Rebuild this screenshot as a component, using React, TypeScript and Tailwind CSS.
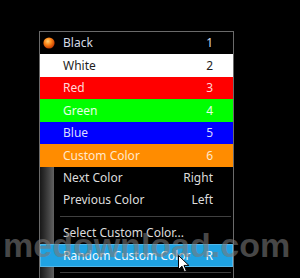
import React from "react";

const font = { fontFamily: '"Noto Sans", "Open Sans", sans-serif' };

function Orb() {
  return (
    <svg width="12" height="12" viewBox="0 0 12 12">
      <defs>
        <radialGradient id="orb" cx="0.4" cy="0.35" r="0.65">
          <stop offset="0" stopColor="#ffd27a" />
          <stop offset="0.45" stopColor="#ff8a1a" />
          <stop offset="1" stopColor="#c43a00" />
        </radialGradient>
      </defs>
      <circle cx="6" cy="6" r="5.6" fill="url(#orb)" />
    </svg>
  );
}

function Cursor() {
  return (
    <svg width="12" height="18" viewBox="0 0 12 18">
      <path d="M0.5 0.5 L0.5 14.5 L4 11.2 L6.4 16.8 L8.4 16 L6 10.4 L10.8 10.4 Z" fill="#ffffff" stroke="#000000" strokeWidth="1" strokeLinejoin="round" />
    </svg>
  );
}

type ColorRow = { label: string; key: string; bg: string; text: string; h: string };

const colorRows: ColorRow[] = [
  { label: "White", key: "2", bg: "bg-white", text: "text-[#1e1e1e]", h: "h-[23px]" },
  { label: "Red", key: "3", bg: "bg-[#ff0000]", text: "text-[#ffd8d8]", h: "h-[22px]" },
  { label: "Green", key: "4", bg: "bg-[#00ff00]", text: "text-[#e8ffe8]", h: "h-[23px]" },
  { label: "Blue", key: "5", bg: "bg-[#0000ff]", text: "text-[#dcdcff]", h: "h-[22px]" },
  { label: "Custom Color", key: "6", bg: "bg-[#ff8c00]", text: "text-[#ffe8cc]", h: "h-[23px]" },
];

export default function App() {
  return (
    <div className="relative w-[300px] h-[278px] bg-black overflow-hidden text-[12px] leading-none" style={font}>
      <div className="pt-[31px] pl-[39px]">
        <div className="w-[195px] h-[260px] border border-b-0 border-[#6a6a6a] bg-black flex flex-col">
          <div className="flex items-center h-[22px] pr-[20px] text-[#d4dae6]">
            <div className="w-[23px] flex justify-center pr-[5px]">
              <Orb />
            </div>
            <span className="flex-1">Black</span>
            <span>1</span>
          </div>
          {colorRows.map((r) => (
            <div key={r.label} className={`flex items-center ${r.h} pl-[23px] pr-[20px] ${r.bg} ${r.text}`}>
              <span className="flex-1">{r.label}</span>
              <span>{r.key}</span>
            </div>
          ))}
          <div className="relative flex-1 flex flex-col">
            <div className="absolute left-0 top-0 bottom-0 w-[14px] bg-gradient-to-r from-[#181818] to-[#626262]" />
            <div className="relative flex items-center h-[22px] pl-[23px] pr-[20px] text-[#dcdcdc]">
              <span className="flex-1">Next Color</span>
              <span>Right</span>
            </div>
            <div className="relative flex items-center h-[22px] pl-[23px] pr-[20px] text-[#dcdcdc]">
              <span className="flex-1">Previous Color</span>
              <span>Left</span>
            </div>
            <div className="relative h-[11px] flex items-center pl-[20px] pr-[2px]">
              <div className="h-px w-full bg-[#404040]" />
            </div>
            <div className="relative flex items-center h-[22px] pl-[23px] pr-[20px] text-[#dcdcdc]">
              <span className="flex-1">Select Custom Color...</span>
            </div>
            <div className="relative flex items-center h-[23px] pl-[23px] pr-[20px] bg-[#1fa2e2] border border-[#52b8ea] text-[#eef8ff]">
              <span className="flex-1 -ml-px">Random Custom Color</span>
              <span className="-mr-px">R</span>
            </div>
            <div className="relative h-[11px] flex items-center pl-[20px] pr-[2px]">
              <div className="h-px w-full bg-[#404040]" />
            </div>
          </div>
        </div>
      </div>
      <div
        className="absolute left-[3px] top-[228px] text-[34px] font-bold leading-none text-[rgba(120,120,120,0.6)] pointer-events-none"
        style={{ fontFamily: '"Liberation Sans", Arial, sans-serif' }}
      >
        medownload.com
      </div>
      <div className="absolute left-[178px] top-[255px]">
        <Cursor />
      </div>
    </div>
  );
}
